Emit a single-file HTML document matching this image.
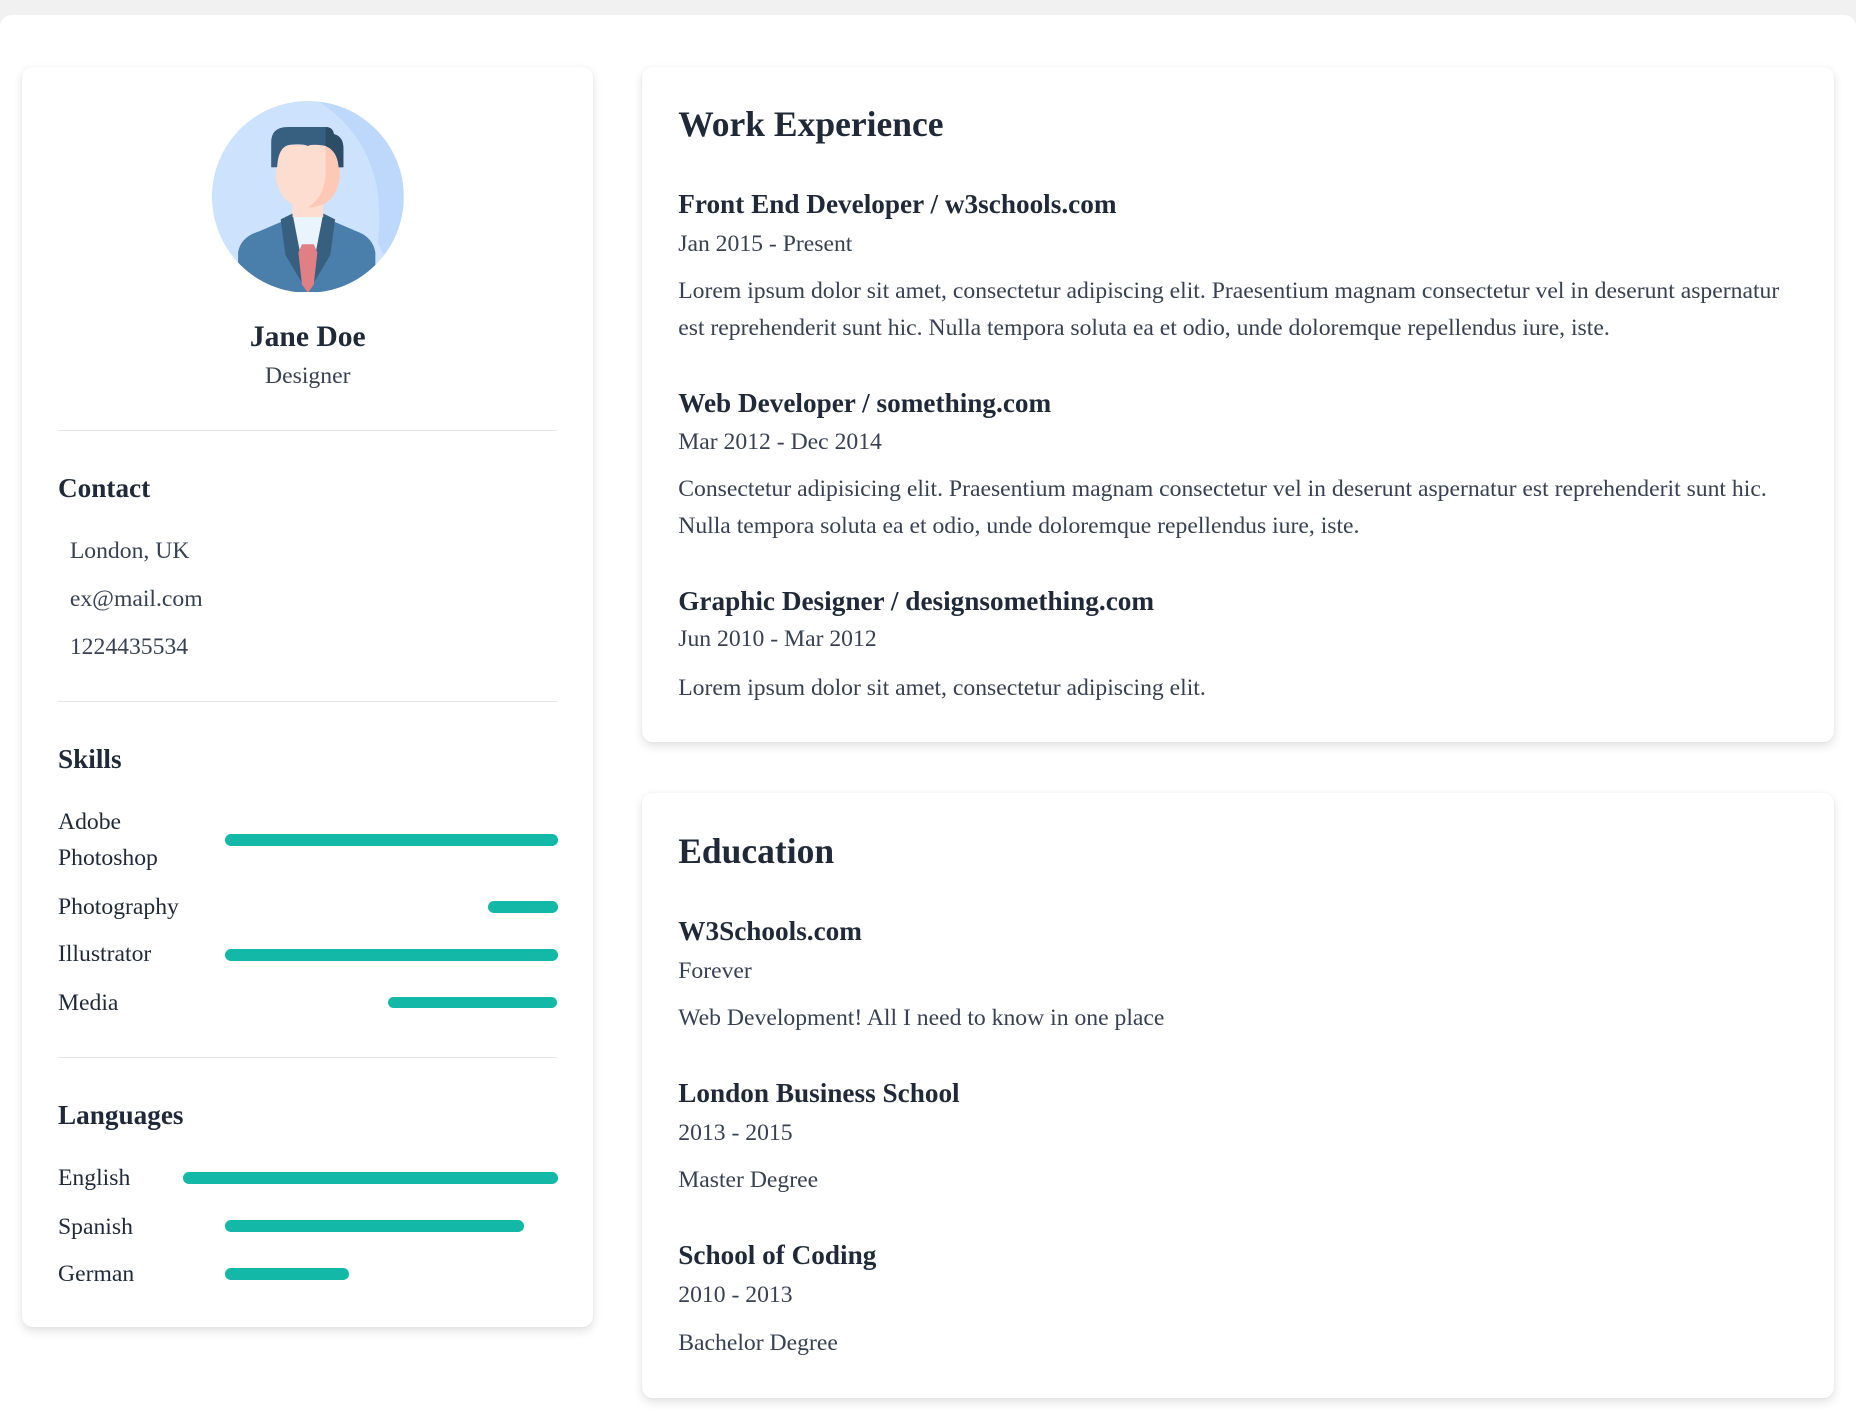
<!DOCTYPE html>
<html><head><meta charset="utf-8"><style>
*{margin:0;padding:0;box-sizing:border-box}
html,body{width:1856px;height:1420px;overflow:hidden;background:#f1f1f1}
#z{zoom:1.18367;position:relative;width:1568px;height:1200px;font-family:"Liberation Serif",serif;color:#374151}
.page{position:absolute;left:0;top:13px;width:1568px;height:1200px;background:#fff;border-radius:10px 10px 0 0}
.card{position:absolute;background:#fff;border-radius:9px;box-shadow:0 3px 8px rgba(0,0,0,.12),0 0 2px rgba(0,0,0,.05)}
.a{position:absolute;white-space:nowrap}
.h{font-weight:bold;color:#1f2937}
.h3{font-size:23px;line-height:30px}
.h2{font-size:30px;line-height:36px}
.hr{position:absolute;left:49px;width:422px;height:1px;background:#e5e7eb}
.bar{position:absolute;height:10px;background:#14b8a6;border-radius:5px}
.t{font-size:20px;line-height:31px}
</style></head><body><div id="z">
<div class="page"></div>
<div class="card" style="left:19px;top:57px;width:482px;height:1064px"></div>
<div class="card" style="left:542px;top:57px;width:1007px;height:570px"></div>
<div class="card" style="left:542px;top:670px;width:1007px;height:511px"></div>

<svg style="position:absolute;left:179px;top:85px" width="162" height="162" viewBox="0 0 162 162">
<defs><clipPath id="c"><circle cx="81" cy="81" r="81"/></clipPath></defs>
<g clip-path="url(#c)">
<rect width="162" height="162" fill="#cce2fd"/>
<path d="M90 0 Q150 40 140 120 L162 162 L162 0Z" fill="#bdd8fa"/>
<path d="M22 162 L22 128 Q24 115 40 110 L68 98 L94 98 L122 110 Q136 115 138 128 L138 162Z" fill="#4a7fab"/>
<path d="M68 95 L94 95 L97 113 L81 162 L65 113Z" fill="#eaf4fc"/>
<path d="M58 100 L68 95 L81 162 L62 130 Z" fill="#365f80"/>
<path d="M104 100 L94 95 L81 162 L100 130 Z" fill="#365f80"/>
<path d="M76 121 L86 121 L89 128 L86 155 L81 162 L76 155 L73 128Z" fill="#e07f84"/>
<rect x="68" y="72" width="26" height="26" fill="#fdddd0"/>
<path d="M54 40 Q54 24 81 24 Q108 24 108 40 L108 65 Q104 90 81 90 Q58 90 54 65Z" fill="#fdddd0"/>
<path d="M81 24 Q108 24 108 40 L108 65 Q104 90 81 90 Q96 80 96 60 L96 24Z" fill="#fdc8b6"/>
<path d="M50 56 L50 35 Q50 22 64 22 L96 22 Q102 22 103 28 Q111 30 111 40 L111 56 L107 56 Q106 42 96 38 Q85 36 81 38 Q77 36 66 37 Q56 38 55 56Z" fill="#365f80"/>
<path d="M96 22 Q102 22 103 28 Q111 30 111 40 L111 56 L107 56 Q106 42 96 38Z" fill="#2b4d66"/>
</g></svg>

<div class="a h" style="left:0;width:520px;text-align:center;top:270px;font-size:25px;line-height:30px">Jane Doe</div>
<div class="a" style="left:0;width:520px;text-align:center;top:305px;font-size:20px;line-height:26px">Designer</div>
<div class="hr" style="top:363px"></div>
<div class="a h h3" style="left:49px;top:398px">Contact</div>
<div class="a t" style="left:59px;top:450px">London, UK</div>
<div class="a t" style="left:59px;top:491px">ex@mail.com</div>
<div class="a t" style="left:59px;top:531px">1224435534</div>
<div class="hr" style="top:592px"></div>
<div class="a h h3" style="left:49px;top:627px">Skills</div>
<div class="a t" style="left:49px;top:679px;color:#1f2937">Adobe<br>Photoshop</div>
<div class="bar" style="left:190px;width:281px;top:705px"></div>
<div class="a t" style="left:49px;top:751px;color:#1f2937">Photography</div>
<div class="bar" style="left:412px;width:59px;top:761px"></div>
<div class="a t" style="left:49px;top:791px;color:#1f2937">Illustrator</div>
<div class="bar" style="left:190px;width:281px;top:802px"></div>
<div class="a t" style="left:49px;top:832px;color:#1f2937">Media</div>
<div class="bar" style="left:328px;width:143px;top:842px"></div>
<div class="hr" style="top:893px"></div>
<div class="a h h3" style="left:49px;top:928px">Languages</div>
<div class="a t" style="left:49px;top:980px;color:#1f2937">English</div>
<div class="bar" style="left:155px;width:316px;top:990px"></div>
<div class="a t" style="left:49px;top:1021px;color:#1f2937">Spanish</div>
<div class="bar" style="left:190px;width:253px;top:1031px"></div>
<div class="a t" style="left:49px;top:1061px;color:#1f2937">German</div>
<div class="bar" style="left:190px;width:105px;top:1071px"></div>

<div class="a h h2" style="left:573px;top:87px">Work Experience</div>
<div class="a h h3" style="left:573px;top:158px">Front End Developer / w3schools.com</div>
<div class="a t" style="left:573px;top:191px">Jan 2015 - Present</div>
<div class="a t" style="left:573px;top:231px">Lorem ipsum dolor sit amet, consectetur adipiscing elit. Praesentium magnam consectetur vel in deserunt aspernatur<br>est reprehenderit sunt hic. Nulla tempora soluta ea et odio, unde doloremque repellendus iure, iste.</div>
<div class="a h h3" style="left:573px;top:326px">Web Developer / something.com</div>
<div class="a t" style="left:573px;top:358px">Mar 2012 - Dec 2014</div>
<div class="a t" style="left:573px;top:398px">Consectetur adipisicing elit. Praesentium magnam consectetur vel in deserunt aspernatur est reprehenderit sunt hic.<br>Nulla tempora soluta ea et odio, unde doloremque repellendus iure, iste.</div>
<div class="a h h3" style="left:573px;top:493px">Graphic Designer / designsomething.com</div>
<div class="a t" style="left:573px;top:525px">Jun 2010 - Mar 2012</div>
<div class="a t" style="left:573px;top:566px">Lorem ipsum dolor sit amet, consectetur adipiscing elit.</div>

<div class="a h h2" style="left:573px;top:701px">Education</div>
<div class="a h h3" style="left:573px;top:772px">W3Schools.com</div>
<div class="a t" style="left:573px;top:805px">Forever</div>
<div class="a t" style="left:573px;top:845px">Web Development! All I need to know in one place</div>
<div class="a h h3" style="left:573px;top:909px">London Business School</div>
<div class="a t" style="left:573px;top:942px">2013 - 2015</div>
<div class="a t" style="left:573px;top:982px">Master Degree</div>
<div class="a h h3" style="left:573px;top:1046px">School of Coding</div>
<div class="a t" style="left:573px;top:1079px">2010 - 2013</div>
<div class="a t" style="left:573px;top:1119px">Bachelor Degree</div>
</div></body></html>
